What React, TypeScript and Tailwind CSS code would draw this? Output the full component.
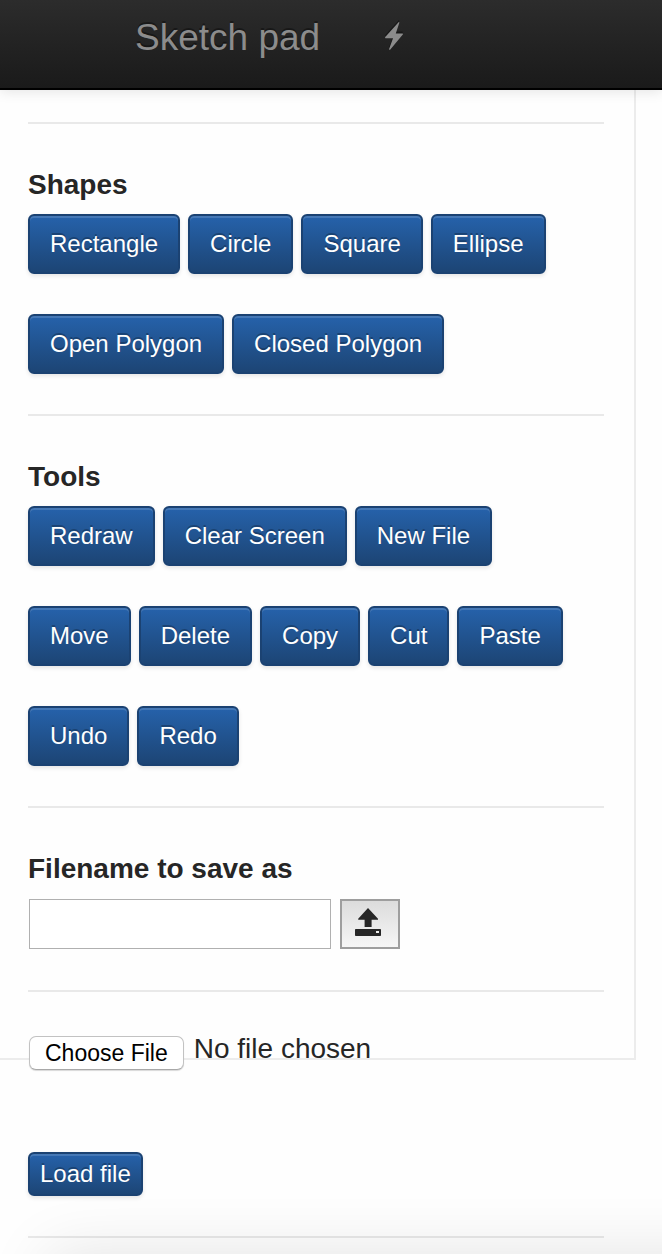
import { useState } from "react";
import type { ReactNode } from "react";

const shapeRows = [
  ["Rectangle", "Circle", "Square", "Ellipse"],
  ["Open Polygon", "Closed Polygon"],
];

const toolRows = [
  ["Redraw", "Clear Screen", "New File"],
  ["Move", "Delete", "Copy", "Cut", "Paste"],
  ["Undo", "Redo"],
];

const headingLook = "mb-2 block text-[28px] leading-[42px] font-bold";

const buttonLook =
  "rounded-[6px] border-2 border-[#1b4272] bg-linear-to-b from-[#2663ad] to-[#1c4473] bg-origin-border text-2xl text-white [text-shadow:0_-2px_0_rgba(0,0,0,0.25)] shadow-[inset_0_2px_0_rgba(255,255,255,0.15),0_2px_4px_rgba(0,0,0,0.1)]";

function ButtonRows({ rows }: { rows: string[][] }) {
  return (
    <div className="flex flex-col gap-10">
      {rows.map((row) => (
        <div key={row[0]} className="flex flex-wrap gap-2">
          {row.map((name) => (
            <button key={name} type="button" className={`${buttonLook} h-[60px] px-5`}>
              {name}
            </button>
          ))}
        </div>
      ))}
    </div>
  );
}

function Section({ title, children }: { title: string; children: ReactNode }) {
  return (
    <section className="py-10">
      <h2 className={headingLook}>{title}</h2>
      {children}
    </section>
  );
}

function Rule() {
  return <hr className="border-t-2 border-[#e9e9e9]" />;
}

function BoltIcon() {
  return (
    <svg viewBox="0 0 18 28" className="h-7 w-[18px] drop-shadow-[0_-2px_0_rgba(0,0,0,0.35)]" aria-hidden="true">
      <path d="M13.8 0 0 15.2 0.4 16.2H8L4 27.2 4.9 28 18 12.3 17.6 11.4H10.8L14.4 0.6Z" fill="#8c8c8c" />
    </svg>
  );
}

function UploadIcon() {
  return (
    <svg viewBox="0 0 26 28" className="h-7 w-[26px]" aria-hidden="true">
      <path d="M13 0 23 10.8V11.8H16.6V19H9.6V11.8H3.2V10.8Z" fill="#262626" />
      <path
        d="M0.8 21H25.2Q26 21 26 21.8V27.2Q26 28 25.2 28H0.8Q0 28 0 27.2V21.8Q0 21 0.8 21ZM21 23V25H24V23Z"
        fill="#262626"
        fillRule="evenodd"
      />
    </svg>
  );
}

export default function App() {
  const [fileName, setFileName] = useState("No file chosen");

  return (
    <div className="relative min-h-screen overflow-hidden bg-[#fefefe] font-['Liberation_Sans',Arial,sans-serif] text-[#262626]">
      <header className="relative flex h-[90px] items-start gap-[65px] border-b-2 border-black bg-linear-to-b from-[#2c2c2c] to-[#1a1a1a] pt-4 pl-[135px] shadow-[0_2px_12px_rgba(0,0,0,0.1)]">
        <h1 className="text-[37px] leading-[44px] text-[#8c8c8c] [text-shadow:0_-2px_0_rgba(0,0,0,0.35)]">Sketch pad</h1>
        <a href="#draw" aria-label="Quick draw" className="pt-1.5">
          <BoltIcon />
        </a>
      </header>

      <main>
        <div className="mr-[26px] border-r-2 border-b-2 border-[#ececec] pt-8 pr-[30px] pl-7">
          <Rule />
          <Section title="Shapes">
            <ButtonRows rows={shapeRows} />
          </Section>
          <Rule />
          <Section title="Tools">
            <ButtonRows rows={toolRows} />
          </Section>
          <Rule />
          <section className="py-10">
            <label htmlFor="filename" className={headingLook}>
              Filename to save as
            </label>
            <div className="flex h-[52px] items-center gap-[9px] pl-px">
              <input
                id="filename"
                type="text"
                className="h-[50px] w-[302px] border border-[#b0b0b0] bg-white px-2 text-2xl"
              />
              <button
                type="button"
                aria-label="Save file"
                className="flex h-[50px] w-[60px] items-center justify-center border-2 border-[#9e9e9e] bg-linear-to-b from-[#dcdcdc] to-[#f6f6f6] pr-1 pb-1"
              >
                <UploadIcon />
              </button>
            </div>
          </section>
          <Rule />
          <div className="mt-11 -mb-3 flex pl-px">
            <label className="relative flex h-[34px] items-start gap-2.5">
              <span className="rounded-[7px] border border-[#c2c2c2] border-b-[#a8a8a8] bg-white px-[15px] text-[23px] leading-8 text-black shadow-[0_1px_1px_rgba(0,0,0,0.15)]">
                Choose File
              </span>
              <span className="text-[28px] leading-[26px]">{fileName}</span>
              <input
                type="file"
                onChange={(event) => setFileName(event.target.files?.[0]?.name ?? "No file chosen")}
                className="absolute inset-0 w-full opacity-0"
              />
            </label>
          </div>
        </div>

        <div className="mr-7 pt-[92px] pr-[30px] pb-4 pl-7">
          <button type="button" className={`${buttonLook} mb-10 block h-11 px-2.5`}>
            Load file
          </button>
          <Rule />
        </div>
      </main>

      <div className="pointer-events-none absolute top-full -right-24 left-12 h-24 shadow-[0_0_64px_rgba(0,0,0,0.11)]" />
    </div>
  );
}
